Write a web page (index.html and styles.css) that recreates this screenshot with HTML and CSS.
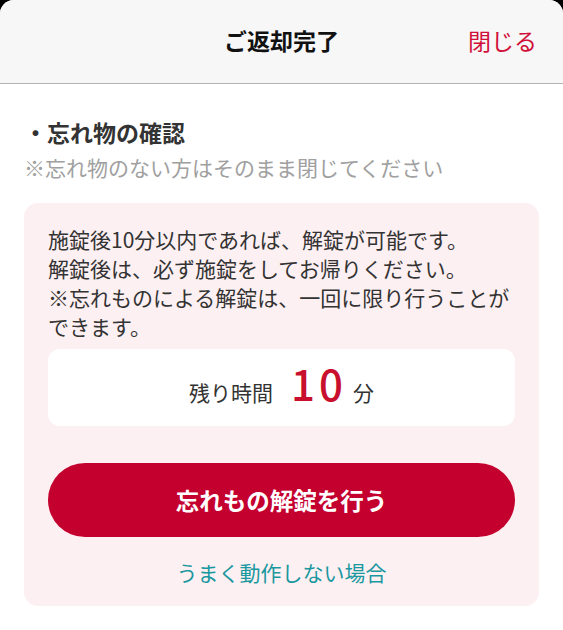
FILE: index.html
```html
<!DOCTYPE html>
<html lang="ja">
<head>
    <meta charset="UTF-8">
    <meta name="viewport" content="width=device-width, initial-scale=1.0">
    <title>ご返却完了</title>
    <link rel="stylesheet" href="styles.css">
</head>
<body>
    <div class="sheet">
        <div class="sheet-header">
            <span></span>
            <h1 class="sheet-title">ご返却完了</h1>
            <a class="close-link" href="#">閉じる</a>
        </div>

        <div class="sheet-body">
            <h2 class="section-title">・忘れ物の確認</h2>
            <p class="section-note">※忘れ物のない方はそのまま閉じてください</p>

            <div class="unlock-card">
                <p class="unlock-text">施錠後10分以内であれば、解錠が可能です。<br>解錠後は、必ず施錠をしてお帰りください。<br>※忘れものによる解錠は、一回に限り行うことができます。</p>

                <div class="timer-box">
                    <span class="timer-label">残り時間</span>
                    <span class="timer-value">10</span>
                    <span class="timer-unit">分</span>
                </div>

                <button class="unlock-button" type="button">忘れもの解錠を行う</button>

                <a class="help-link" href="#">うまく動作しない場合</a>
            </div>
        </div>
    </div>
</body>
</html>
```

FILE: styles.css
```css
body {
    margin: 0;
    background: #000;
    font-family: "Noto Sans CJK JP", "Noto Sans", sans-serif;
}

.sheet {
    min-height: 630px;
    background: #fff;
    border-radius: 14px 14px 0 0;
    overflow: hidden;
}

.sheet-header {
    display: grid;
    grid-template-columns: 1fr auto 1fr;
    align-items: center;
    height: 84px;
    padding: 0 26px 3px;
    box-sizing: border-box;
    background: #f7f7f7;
    border-bottom: 1px solid #b3b3b3;
}

.sheet-title {
    margin: 0;
    font-size: 23px;
    font-weight: 700;
    color: #111;
}

.close-link {
    justify-self: end;
    font-size: 23px;
    color: #d0103a;
    text-decoration: none;
}

.sheet-body {
    padding: 32px 24px 0;
}

.section-title {
    margin: 0;
    font-size: 23px;
    line-height: 33px;
    font-weight: 700;
    color: #333;
}

.section-note {
    margin: 2px 0 0;
    font-size: 21px;
    line-height: 32px;
    color: #a0a0a0;
}

.unlock-card {
    margin-top: 20px;
    padding: 22px 24px 19px;
    background: #fdf0f2;
    border-radius: 14px;
}

.unlock-text {
    margin: 0;
    font-size: 21px;
    line-height: 29px;
    color: #333;
}

.timer-box {
    display: flex;
    align-items: baseline;
    justify-content: center;
    height: 77px;
    margin-top: 8px;
    padding-top: 13px;
    box-sizing: border-box;
    background: #fff;
    border-radius: 12px;
    color: #333;
}

.timer-label,
.timer-unit {
    font-size: 21px;
}

.timer-label {
    margin-right: 18px;
}

.timer-value {
    margin-right: 6px;
    font-size: 42px;
    line-height: 42px;
    font-weight: 500;
    letter-spacing: 4px;
    color: #c8102e;
}

.unlock-button {
    display: block;
    width: 100%;
    height: 74px;
    margin-top: 37px;
    border: none;
    border-radius: 37px;
    background: #c4002f;
    color: #fff;
    font-family: inherit;
    font-size: 23.5px;
    font-weight: 700;
    cursor: pointer;
}

.help-link {
    display: block;
    margin-top: 20px;
    text-align: center;
    font-size: 21px;
    line-height: 30px;
    color: #1a98a0;
    text-decoration: none;
}
```
